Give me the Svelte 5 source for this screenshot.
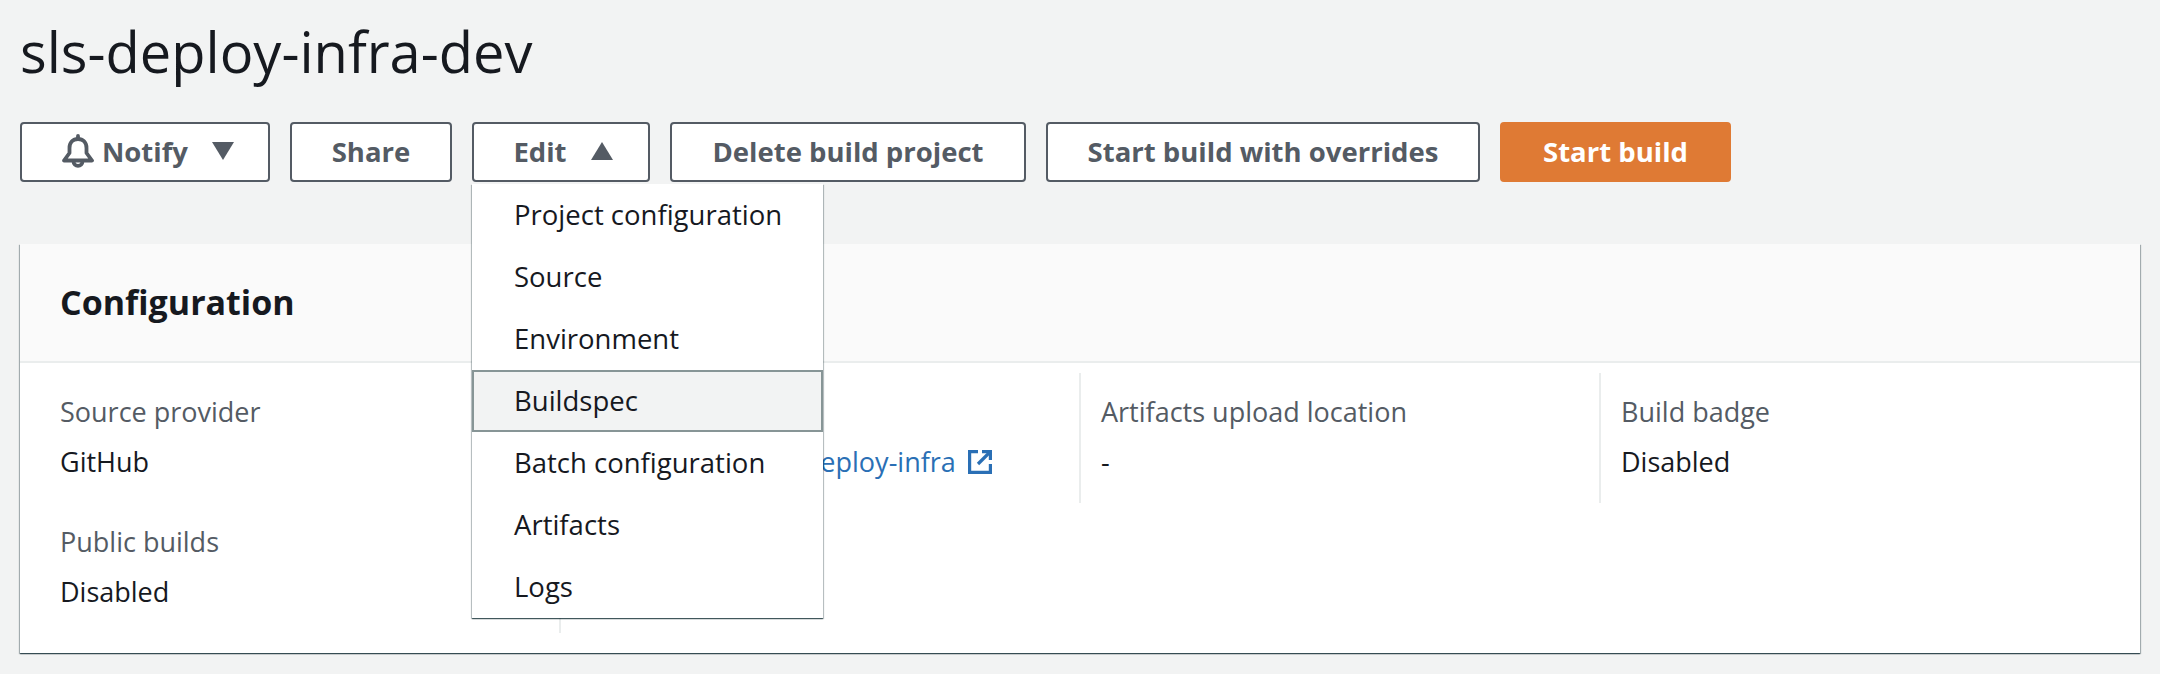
<script>
  const menuItems = [
    "Project configuration",
    "Source",
    "Environment",
    "Buildspec",
    "Batch configuration",
    "Artifacts",
    "Logs",
  ];
</script>

<div class="page">
  <h1 class="title">sls-deploy-infra-dev</h1>

  <div class="actions">
    <button class="btn notify">
      <svg class="bell" viewBox="0 0 32 34" width="32" height="34" fill="none" stroke="currentColor" stroke-width="3.8" stroke-linejoin="round" stroke-linecap="round">
        <path d="M16 2v3" />
        <path d="M2 26.5 L7.5 19 V14 C7.5 8.5 11 5 16 5 C21 5 24.5 8.5 24.5 14 V19 L30 26.5 Z" />
        <path d="M11.5 27 C11.5 33.5 20.5 33.5 20.5 27" />
      </svg>
      <span>Notify</span>
      <span class="caret down"></span>
    </button>
    <button class="btn share">Share</button>
    <div class="edit-wrap">
      <button class="btn edit">
        <span>Edit</span>
        <span class="caret up"></span>
      </button>
      <ul class="menu">
        {#each menuItems as item}
          <li class:hover={item === "Buildspec"}>{item}</li>
        {/each}
      </ul>
    </div>
    <button class="btn delete">Delete build project</button>
    <button class="btn overrides">Start build with overrides</button>
    <button class="btn primary">Start build</button>
  </div>

  <section class="card">
    <header class="card-head">
      <h2>Configuration</h2>
    </header>
    <div class="grid">
      <div class="col">
        <div class="item">
          <div class="label">Source provider</div>
          <div class="value">GitHub</div>
        </div>
        <div class="item">
          <div class="label">Public builds</div>
          <div class="value">Disabled</div>
        </div>
      </div>
      <div class="col divided">
        <div class="item">
          <div class="label">Repository</div>
          <div class="value link-row">
            <a href="#top" class="link">aws-samples/sls-deploy-infra</a>
            <svg class="ext" viewBox="0 0 24 24" width="24" height="24" fill="none" stroke="currentColor" stroke-width="3.2">
              <path d="M10 1.6 H1.6 V22.4 H22.4 V14" />
              <path d="M14 1.6 H22.4 V10" />
              <path d="M22 2 L10 14" />
            </svg>
          </div>
        </div>
      </div>
      <div class="col divided short">
        <div class="item">
          <div class="label">Artifacts upload location</div>
          <div class="value">-</div>
        </div>
      </div>
      <div class="col divided short">
        <div class="item">
          <div class="label">Build badge</div>
          <div class="value">Disabled</div>
        </div>
      </div>
    </div>
  </section>
</div>

<style>
  :global(body) {
    background: #f2f3f3;
    color: #16191f;
  }

  .page {
    padding: 0 20px;
    height: 674px;
    box-sizing: border-box;
    overflow: hidden;
    font-family: "Open Sans", "Noto Sans", sans-serif;
  }

  .title {
    margin: 0;
    padding-top: 15px;
    height: 122px;
    box-sizing: border-box;
    font-size: 56px;
    line-height: 72px;
    font-weight: 400;
  }

  .actions {
    display: flex;
    gap: 20px;
    height: 60px;
  }

  .btn {
    height: 60px;
    box-sizing: border-box;
    border: 2px solid #545b64;
    border-radius: 4px;
    background: #fff;
    color: #545b64;
    font-family: inherit;
    font-size: 27.5px;
    font-weight: 700;
    padding: 0 0 2px;
    display: flex;
    align-items: center;
    justify-content: center;
  }

  .notify { width: 250px; padding-left: 6px; }
  .share { width: 162px; }
  .edit { width: 178px; padding-left: 4px; }
  .delete { width: 356px; }
  .overrides { width: 434px; }

  .primary {
    width: 231px;
    background: #df7a34;
    border-color: #df7a34;
    color: #fff;
  }

  .bell { margin-right: 8px; }

  .caret {
    width: 0;
    height: 0;
    border-left: 11px solid transparent;
    border-right: 11px solid transparent;
  }

  .caret.down {
    border-top: 18px solid #545b64;
    margin-left: 24px;
  }

  .caret.up {
    border-bottom: 18px solid #545b64;
    margin-left: 24px;
  }

  .edit-wrap {
    position: relative;
  }

  .menu {
    position: absolute;
    top: 62px;
    left: 0;
    width: 351px;
    margin: 0;
    padding: 0;
    list-style: none;
    background: #fff;
    z-index: 2;
    box-shadow: 0 1px 1px rgba(0, 28, 36, 0.6), 1px 1px 1px rgba(0, 28, 36, 0.2), -1px 1px 1px rgba(0, 28, 36, 0.2);
  }

  .menu li {
    height: 62px;
    box-sizing: border-box;
    padding: 0 0 2px 42px;
    display: flex;
    align-items: center;
    font-size: 27.5px;
    color: #16191f;
  }

  .menu li.hover {
    background: #f2f3f3;
    border: 2px solid #879596;
    padding-left: 40px;
  }

  .card {
    margin-top: 62px;
    height: 409px;
    background: #fff;
    box-shadow: 0 1px 1px rgba(0, 28, 36, 0.6), 1px 1px 1px rgba(0, 28, 36, 0.25), -1px 1px 1px rgba(0, 28, 36, 0.25);
  }

  .card-head {
    height: 119px;
    box-sizing: border-box;
    background: #fafafa;
    border-bottom: 2px solid #eaeded;
    padding: 0 0 2px 40px;
    display: flex;
    align-items: center;
  }

  .card-head h2 {
    margin: 0;
    font-size: 34px;
    font-weight: 700;
  }

  .grid {
    display: grid;
    grid-template-columns: repeat(4, 520px);
    padding: 10px 0 0 19px;
    box-sizing: border-box;
  }

  .col {
    padding-left: 21px;
    height: 260px;
    box-sizing: border-box;
  }

  .col.divided {
    border-left: 2px solid #eaeded;
    padding-left: 20px;
  }

  .col.short {
    height: 130px;
  }

  .item {
    height: 130px;
    padding-top: 21px;
    box-sizing: border-box;
  }

  .label {
    color: #545b64;
    font-size: 27px;
    line-height: 36px;
  }

  .value {
    font-size: 27px;
    line-height: 36px;
    margin-top: 14px;
    color: #16191f;
  }

  .link-row {
    display: flex;
    align-items: center;
    gap: 12px;
    margin-left: 10px;
    color: #2a6fb5;
  }

  .link {
    color: #2a6fb5;
    text-decoration: none;
  }
</style>
